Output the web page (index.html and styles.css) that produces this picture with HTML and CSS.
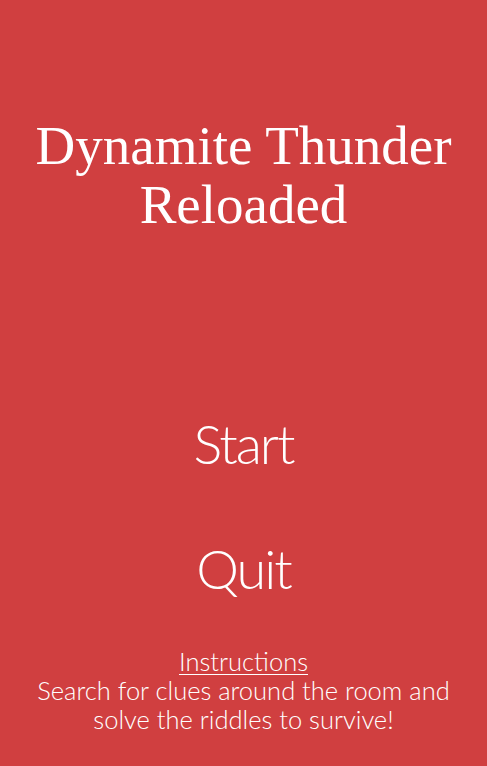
FILE: index.html
```html
<!DOCTYPE html>
<html>
<head>
<meta charset="utf-8">
<link rel="stylesheet" href="styles.css">
</head>
<body>
<main class="screen">
  <h1 class="title">Dynamite Thunder<br>Reloaded</h1>
  <nav class="menu">
    <a class="menu-item">Start</a>
    <a class="menu-item">Quit</a>
  </nav>
  <section class="info">
    <h2 class="info-heading">Instructions</h2>
    <p class="info-text">Search for clues around the room and<br>solve the riddles to survive!</p>
  </section>
</main>
</body>
</html>
```
FILE: styles.css
```css
html, body {
  margin: 0;
  padding: 0;
  background: #d03f40;
}
.screen {
  width: 487px;
  height: 766px;
  display: flex;
  flex-direction: column;
  align-items: center;
  color: #fff;
  text-align: center;
}
.title {
  margin: 116px 0 0;
  font-family: "Liberation Serif", serif;
  font-weight: normal;
  font-size: 55px;
  line-height: 59px;
}
.menu {
  margin-top: 180px;
  display: flex;
  flex-direction: column;
  align-items: center;
  gap: 65px;
}
.menu-item {
  font-family: Lato, sans-serif;
  font-weight: 300;
  font-size: 54px;
  line-height: 60px;
  letter-spacing: -2px;
}
.info {
  margin-top: 48px;
  font-family: Lato, sans-serif;
  font-weight: 300;
  font-size: 25.5px;
  line-height: 29px;
}
.info-heading {
  margin: 0;
  font-size: inherit;
  font-weight: 300;
  text-decoration: underline;
  text-underline-offset: 3px;
  text-decoration-thickness: 1px;
}
.info-text {
  margin: 0;
}
```
